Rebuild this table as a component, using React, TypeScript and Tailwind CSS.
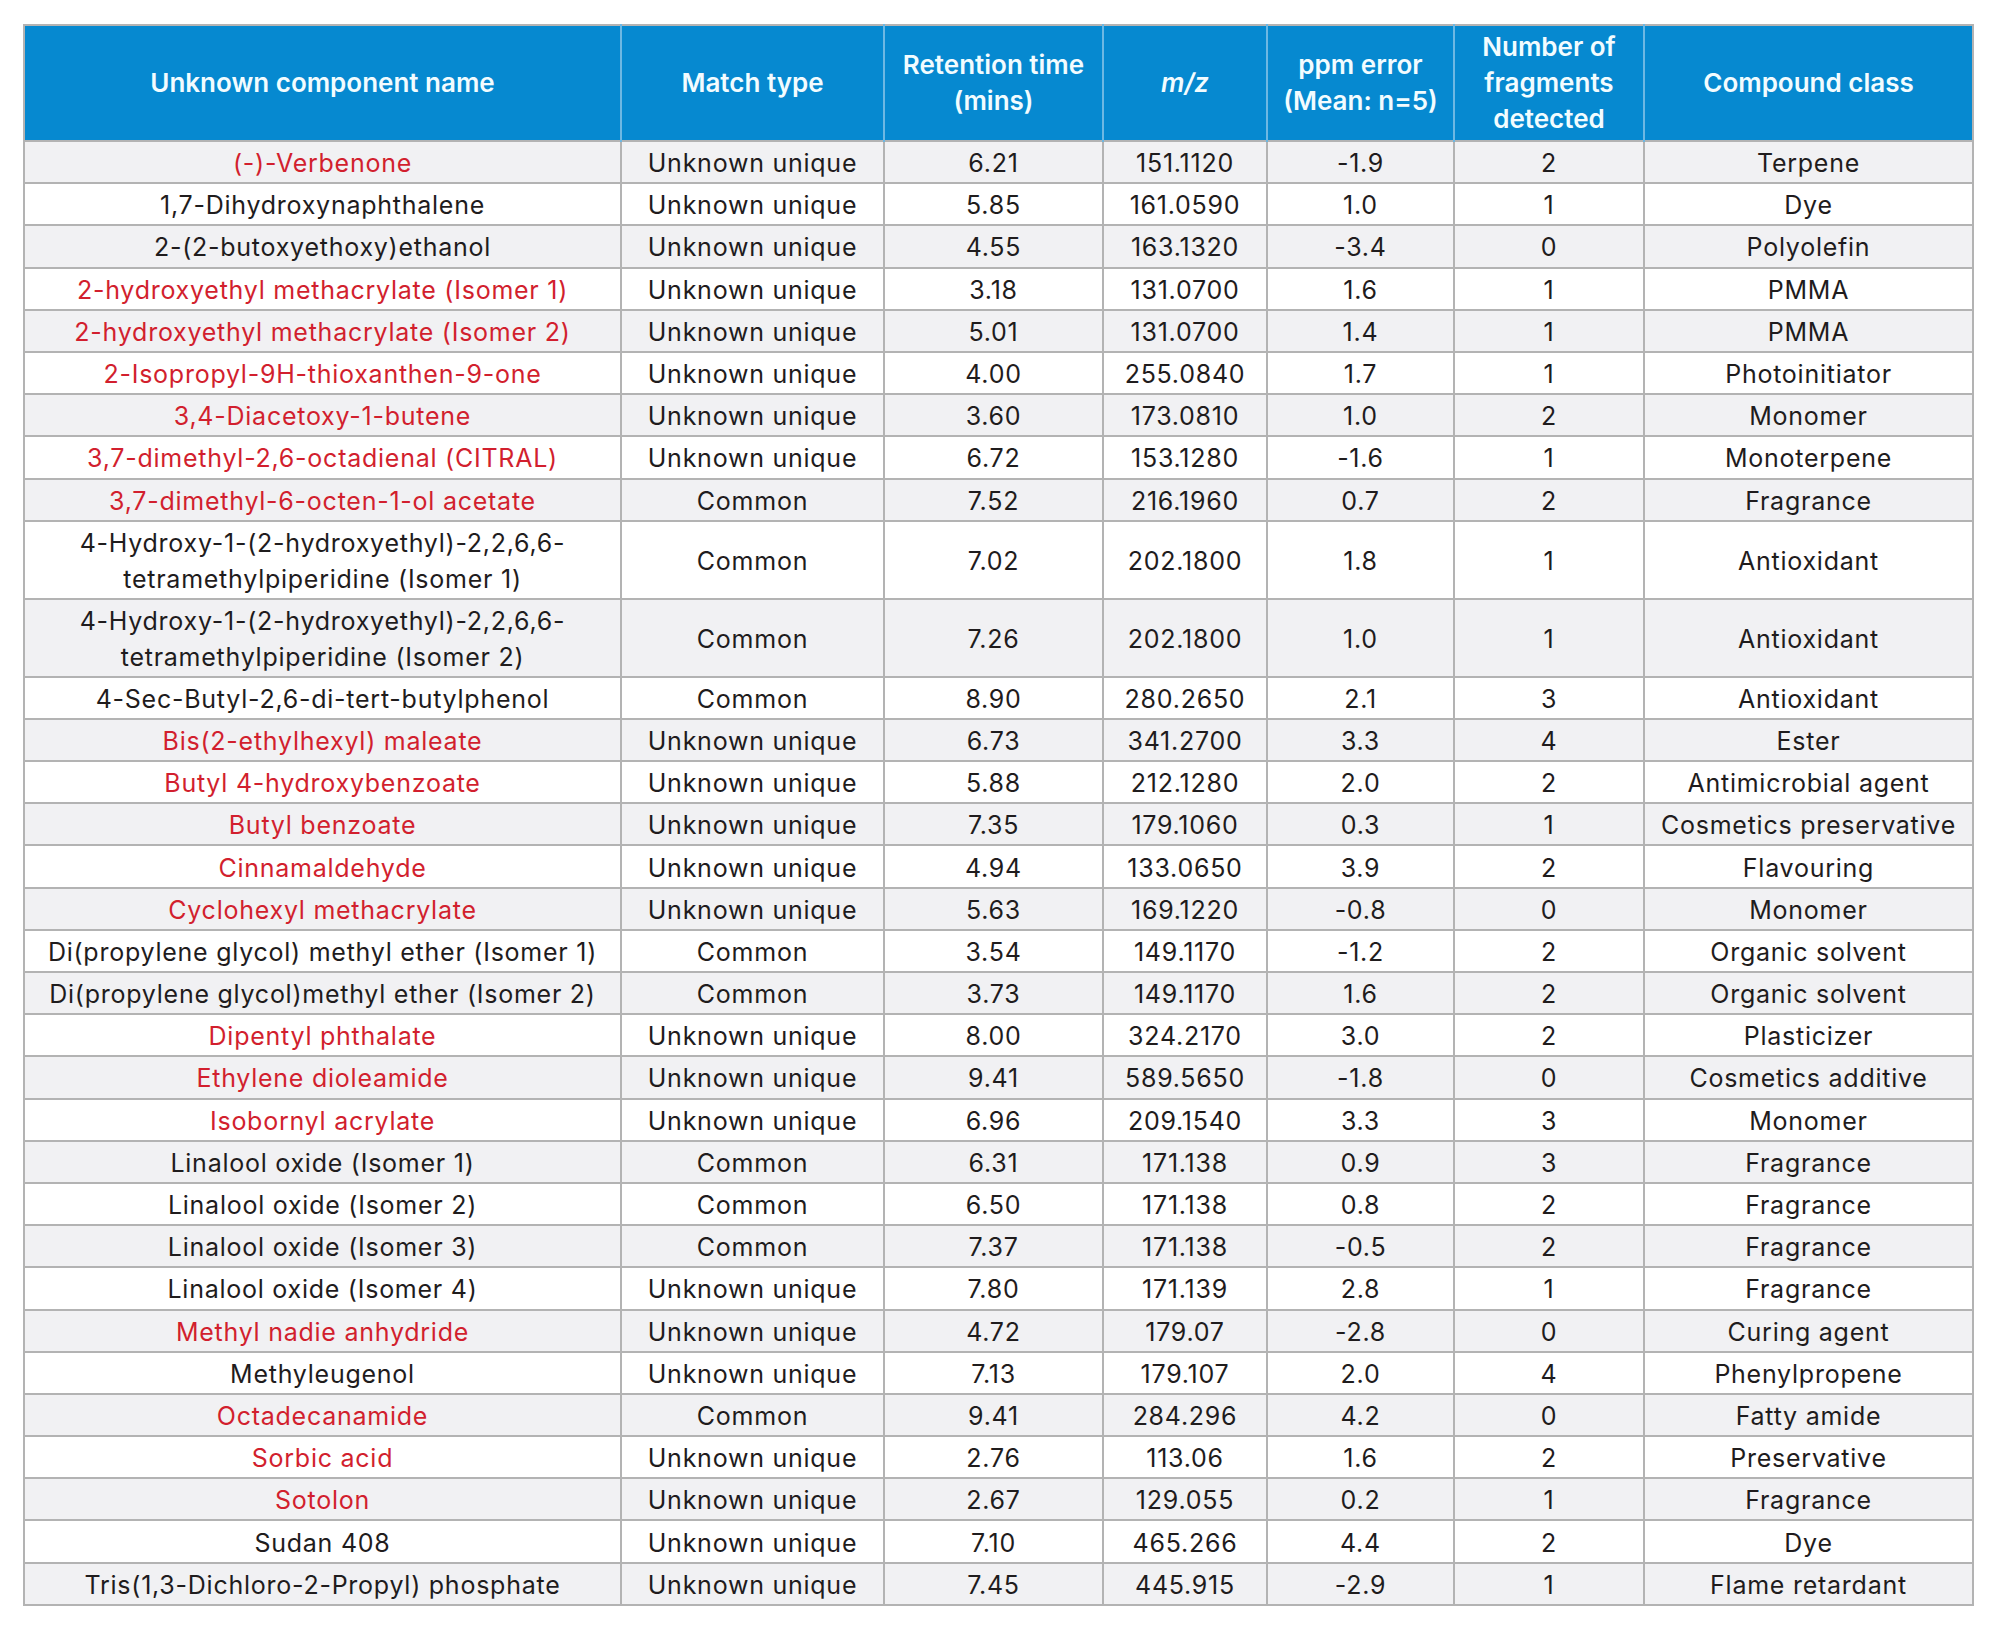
import React from "react";

type Row = {
  name: string;
  red: boolean;
  match: string;
  rt: string;
  mz: string;
  ppm: string;
  frag: string;
  cls: string;
  double?: [string, string];
};

const rows: Row[] = [
  { name: "(-)-Verbenone", red: true, match: "Unknown unique", rt: "6.21", mz: "151.1120", ppm: "-1.9", frag: "2", cls: "Terpene" },
  { name: "1,7-Dihydroxynaphthalene", red: false, match: "Unknown unique", rt: "5.85", mz: "161.0590", ppm: "1.0", frag: "1", cls: "Dye" },
  { name: "2-(2-butoxyethoxy)ethanol", red: false, match: "Unknown unique", rt: "4.55", mz: "163.1320", ppm: "-3.4", frag: "0", cls: "Polyolefin" },
  { name: "2-hydroxyethyl methacrylate (Isomer 1)", red: true, match: "Unknown unique", rt: "3.18", mz: "131.0700", ppm: "1.6", frag: "1", cls: "PMMA" },
  { name: "2-hydroxyethyl methacrylate (Isomer 2)", red: true, match: "Unknown unique", rt: "5.01", mz: "131.0700", ppm: "1.4", frag: "1", cls: "PMMA" },
  { name: "2-Isopropyl-9H-thioxanthen-9-one", red: true, match: "Unknown unique", rt: "4.00", mz: "255.0840", ppm: "1.7", frag: "1", cls: "Photoinitiator" },
  { name: "3,4-Diacetoxy-1-butene", red: true, match: "Unknown unique", rt: "3.60", mz: "173.0810", ppm: "1.0", frag: "2", cls: "Monomer" },
  { name: "3,7-dimethyl-2,6-octadienal (CITRAL)", red: true, match: "Unknown unique", rt: "6.72", mz: "153.1280", ppm: "-1.6", frag: "1", cls: "Monoterpene" },
  { name: "3,7-dimethyl-6-octen-1-ol acetate", red: true, match: "Common", rt: "7.52", mz: "216.1960", ppm: "0.7", frag: "2", cls: "Fragrance" },
  { name: "", double: ["4-Hydroxy-1-(2-hydroxyethyl)-2,2,6,6-", "tetramethylpiperidine (Isomer 1)"], red: false, match: "Common", rt: "7.02", mz: "202.1800", ppm: "1.8", frag: "1", cls: "Antioxidant" },
  { name: "", double: ["4-Hydroxy-1-(2-hydroxyethyl)-2,2,6,6-", "tetramethylpiperidine (Isomer 2)"], red: false, match: "Common", rt: "7.26", mz: "202.1800", ppm: "1.0", frag: "1", cls: "Antioxidant" },
  { name: "4-Sec-Butyl-2,6-di-tert-butylphenol", red: false, match: "Common", rt: "8.90", mz: "280.2650", ppm: "2.1", frag: "3", cls: "Antioxidant" },
  { name: "Bis(2-ethylhexyl) maleate", red: true, match: "Unknown unique", rt: "6.73", mz: "341.2700", ppm: "3.3", frag: "4", cls: "Ester" },
  { name: "Butyl 4-hydroxybenzoate", red: true, match: "Unknown unique", rt: "5.88", mz: "212.1280", ppm: "2.0", frag: "2", cls: "Antimicrobial agent" },
  { name: "Butyl benzoate", red: true, match: "Unknown unique", rt: "7.35", mz: "179.1060", ppm: "0.3", frag: "1", cls: "Cosmetics preservative" },
  { name: "Cinnamaldehyde", red: true, match: "Unknown unique", rt: "4.94", mz: "133.0650", ppm: "3.9", frag: "2", cls: "Flavouring" },
  { name: "Cyclohexyl methacrylate", red: true, match: "Unknown unique", rt: "5.63", mz: "169.1220", ppm: "-0.8", frag: "0", cls: "Monomer" },
  { name: "Di(propylene glycol) methyl ether (Isomer 1)", red: false, match: "Common", rt: "3.54", mz: "149.1170", ppm: "-1.2", frag: "2", cls: "Organic solvent" },
  { name: "Di(propylene glycol)methyl ether (Isomer 2)", red: false, match: "Common", rt: "3.73", mz: "149.1170", ppm: "1.6", frag: "2", cls: "Organic solvent" },
  { name: "Dipentyl phthalate", red: true, match: "Unknown unique", rt: "8.00", mz: "324.2170", ppm: "3.0", frag: "2", cls: "Plasticizer" },
  { name: "Ethylene dioleamide", red: true, match: "Unknown unique", rt: "9.41", mz: "589.5650", ppm: "-1.8", frag: "0", cls: "Cosmetics additive" },
  { name: "Isobornyl acrylate", red: true, match: "Unknown unique", rt: "6.96", mz: "209.1540", ppm: "3.3", frag: "3", cls: "Monomer" },
  { name: "Linalool oxide (Isomer 1)", red: false, match: "Common", rt: "6.31", mz: "171.138", ppm: "0.9", frag: "3", cls: "Fragrance" },
  { name: "Linalool oxide (Isomer 2)", red: false, match: "Common", rt: "6.50", mz: "171.138", ppm: "0.8", frag: "2", cls: "Fragrance" },
  { name: "Linalool oxide (Isomer 3)", red: false, match: "Common", rt: "7.37", mz: "171.138", ppm: "-0.5", frag: "2", cls: "Fragrance" },
  { name: "Linalool oxide (Isomer 4)", red: false, match: "Unknown unique", rt: "7.80", mz: "171.139", ppm: "2.8", frag: "1", cls: "Fragrance" },
  { name: "Methyl nadie anhydride", red: true, match: "Unknown unique", rt: "4.72", mz: "179.07", ppm: "-2.8", frag: "0", cls: "Curing agent" },
  { name: "Methyleugenol", red: false, match: "Unknown unique", rt: "7.13", mz: "179.107", ppm: "2.0", frag: "4", cls: "Phenylpropene" },
  { name: "Octadecanamide", red: true, match: "Common", rt: "9.41", mz: "284.296", ppm: "4.2", frag: "0", cls: "Fatty amide" },
  { name: "Sorbic acid", red: true, match: "Unknown unique", rt: "2.76", mz: "113.06", ppm: "1.6", frag: "2", cls: "Preservative" },
  { name: "Sotolon", red: true, match: "Unknown unique", rt: "2.67", mz: "129.055", ppm: "0.2", frag: "1", cls: "Fragrance" },
  { name: "Sudan 408", red: false, match: "Unknown unique", rt: "7.10", mz: "465.266", ppm: "4.4", frag: "2", cls: "Dye" },
  { name: "Tris(1,3-Dichloro-2-Propyl) phosphate", red: false, match: "Unknown unique", rt: "7.45", mz: "445.915", ppm: "-2.9", frag: "1", cls: "Flame retardant" },
];

const td = "border-2 border-[#b3b3b3] text-center align-middle p-0 pt-[2px] leading-[36px]";
const th = "border-x-2 border-x-[#6db8e3] text-center align-middle p-0 leading-[36px] font-semibold text-[26px] text-[#f2fcff]";

export default function App() {
  return (
    <div
      className="w-[2000px] h-[1637px] bg-white pt-[24px] pl-[23px]"
      style={{ fontFamily: "Inter, 'Noto Sans', sans-serif" }}
    >
      <table className="table-fixed border-collapse w-[1949px] text-[25px] tracking-[0.03em] text-[#1f1c1d]">
        <colgroup>
          <col className="w-[597px]" />
          <col className="w-[263px]" />
          <col className="w-[219px]" />
          <col className="w-[164px]" />
          <col className="w-[187px]" />
          <col className="w-[190px]" />
          <col className="w-[329px]" />
        </colgroup>
        <thead>
          <tr className="h-[116px] bg-[#0689d0] border-2 border-[#b3b3b3] tracking-normal">
            <th className={th + " border-l-[#b3b3b3]"}>Unknown component name</th>
            <th className={th}>Match type</th>
            <th className={th}>
              Retention time
              <br />
              (mins)
            </th>
            <th className={th}>
              <span className="italic">m/z</span>
            </th>
            <th className={th}>
              ppm error
              <br />
              (Mean: n=5)
            </th>
            <th className={th}>
              Number of
              <br />
              fragments
              <br />
              detected
            </th>
            <th className={th + " border-r-[#b3b3b3]"}>Compound class</th>
          </tr>
        </thead>
        <tbody>
          {rows.map((r, i) => (
            <tr
              key={i}
              className={
                (r.double ? "h-[78px] " : "h-[42.2px] ") +
                (i % 2 === 0 ? "bg-[#f1f1f3]" : "bg-white")
              }
            >
              <td className={td + (r.red ? " text-[#d21f2e]" : "")}>
                {r.double ? (
                  <>
                    {r.double[0]}
                    <br />
                    {r.double[1]}
                  </>
                ) : (
                  r.name
                )}
              </td>
              <td className={td}>{r.match}</td>
              <td className={td}>{r.rt}</td>
              <td className={td}>{r.mz}</td>
              <td className={td}>{r.ppm}</td>
              <td className={td}>{r.frag}</td>
              <td className={td}>{r.cls}</td>
            </tr>
          ))}
        </tbody>
      </table>
    </div>
  );
}
